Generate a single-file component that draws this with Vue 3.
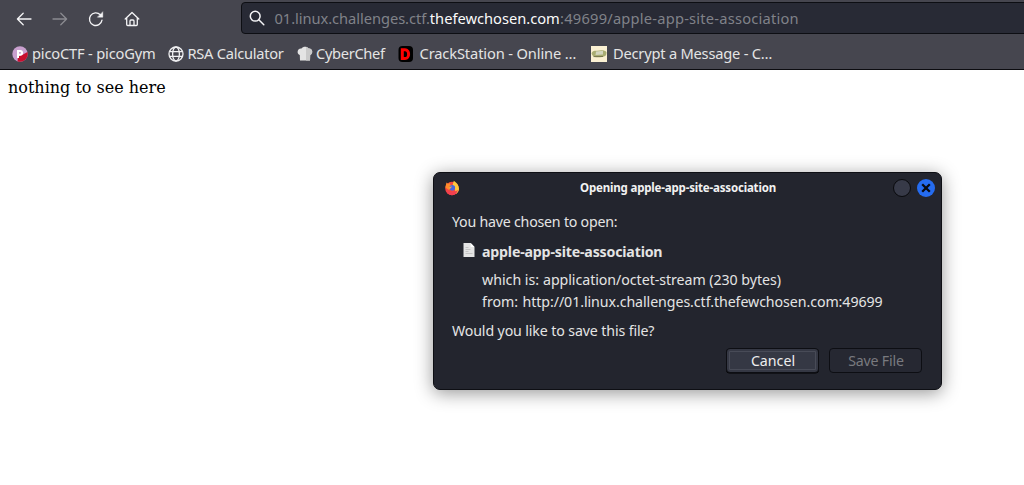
<template>
  <div class="window">
    <header class="chrome">
      <div class="toolbar">
        <nav class="nav">
          <svg viewBox="0 0 16 16"><path d="M15 8H1.500M7.200 2.200 1.400 8l5.800 5.800" /></svg>
          <svg class="off" viewBox="0 0 16 16"><path d="M1 8h13.500M8.800 2.200 14.600 8l-5.800 5.800" /></svg>
          <svg viewBox="0 0 16 16"><path d="M14 9.200A6.300 6.300 0 1 1 12.300 3.800" /><path class="fill" d="M14.800 1v5.200H9.600z" /></svg>
          <svg viewBox="0 0 16 16"><path d="M1.200 8 8 1.500 14.800 8M2.700 7v6.500c0 .7.4 1 1 1h8.600c.6 0 1-.3 1-1V7M6 14.500V10c0-.6.4-1 1-1h2c.6 0 1 .4 1 1v4.500" /></svg>
        </nav>
        <div class="url">
          <svg viewBox="0 0 16 16"><circle cx="6.200" cy="6.200" r="4.900" /><path d="m9.800 9.800 5 5" /></svg>
          <span class="address"><span class="sub">01.linux.challenges.ctf.</span><span class="host">thefewchosen.com</span><span class="path">:49699/apple-app-site-association</span></span>
        </div>
      </div>
      <nav class="bookmarks">
        <a class="bm pico">
          <svg viewBox="0 0 16 16"><circle cx="8" cy="8" r="7.700" fill="#c9a0cf" /><path d="M15.500 6A7.700 7.700 0 0 1 5.500 15.300L6 10.500l5-2z" fill="#c8102e" /><path d="M6 12V4.900h2.200a1.900 1.900 0 0 1 0 3.800H6" fill="none" stroke="#fff" stroke-width="2" /></svg>
          <span>picoCTF - picoGym</span>
        </a>
        <a class="bm rsa">
          <svg viewBox="0 0 16 16" fill="none" stroke="#f0f0f2" stroke-width="1.300"><circle cx="8" cy="8" r="7" /><ellipse cx="8" cy="8" rx="3.400" ry="7" /><path d="M1.500 5.700h13M1.500 10.300h13" /></svg>
          <span>RSA Calculator</span>
        </a>
        <a class="bm chef">
          <svg viewBox="0 0 16 16"><path d="M3 14.500 2.800 9C-.8 8 .2 2 4.500 2.500 6 .3 10.200.3 11.500 2.500c4.200-.5 5 5 1.700 6.500L13 14.500z" fill="#e4e4e4" /><path d="M9 1v13.500h4l.2-5.500C16.500 7.500 15.700 2 11.500 2.500 11 1.500 10 1 9 1z" fill="#cacaca" /></svg>
          <span>CyberChef</span>
        </a>
        <a class="bm crack">
          <svg viewBox="0 0 16 16"><rect x=".5" width="14.500" height="16" rx="4" fill="#000" /><path d="M4.300 3.800h2.700c4.800 0 4.800 8.800 0 8.800H4.300z" fill="none" stroke="#f00" stroke-width="3" /></svg>
          <span>CrackStation - Online …</span>
        </a>
        <a class="bm decrypt">
          <svg viewBox="0 0 16 16"><path fill="#fbf1d3" d="M0 0h16v16H0z" /><path d="M.5 7.500C1.500 4 4 5 6 4.700c3-.5 8-1.200 9.500 1.500.3 3-1.500 4.500-4.500 4.800-4 .5-9 1-10.500-3.500z" fill="#a9ad72" /><path d="M5 5.500 12 4.800v3.700L4.500 9z" fill="#d3d5bf" /><path d="M2.500 10.600 12 10.500" stroke="#77784e" /></svg>
          <span>Decrypt a Message - C…</span>
        </a>
      </nav>
    </header>
    <main class="page">nothing to see here</main>
    <section class="dialog">
      <div class="titlebar">
        <svg class="fox" viewBox="0 0 16 16"><circle cx="8" cy="8.500" r="6.800" fill="#f5483f" /><path d="M9.800.8C15 4 17 10 12.500 13.500 10 14 13 8 8.500 5.500z" fill="#ffc83c" /><path d="M1.300 7.500 2.500 2.600 4.300 4 5.500 2.800 6.500 5 9 6 5 10z" fill="#ff8a2a" /><circle cx="8.300" cy="7.800" r="2.800" fill="#4668df" /><path d="M4.500 7.500 8 6.300 7 8 5.500 9z" fill="#ffa436" /><path d="M2 9c2.500 3.500 7 4 12 1-1 3.500-3 5-6 5.200C4.500 15 2.500 12.500 2 9z" fill="#f23f50" /></svg>
        <h1>Opening apple-app-site-association</h1>
        <i class="round"></i>
        <i class="round close"><svg viewBox="0 0 18 18"><path d="m5.200 5.200 7.600 7.600m0-7.600-7.600 7.600" /></svg></i>
      </div>
      <div class="body">
        <p class="lead">You have chosen to open:</p>
        <div class="file">
          <svg viewBox="0 0 12 14"><path d="M.5 0h7.200L11.500 4v10H.5z" fill="#e4e4e4" /><path d="M7.700 0v4h3.800z" fill="#fff" /><path d="M2.500 4.500h3M2.500 6.500h5M2.500 8.500h3M2.500 10.500h7" stroke="#c4c4c4" /></svg>
          <strong>apple-app-site-association</strong>
        </div>
        <p class="row"><span class="key">which is:</span><span class="kind">application/octet-stream (230 bytes)</span></p>
        <p class="row"><span class="key from">from:</span><span class="source">http://01.linux.challenges.ctf.thefewchosen.com:49699</span></p>
        <p class="ask">Would you like to save this file?</p>
        <div class="buttons">
          <button class="cancel">Cancel</button>
          <button class="save" disabled>Save File</button>
        </div>
      </div>
    </section>
  </div>
</template>

<script setup>
</script>

<style>
body { margin: 0; background: #fff; overflow: hidden; }
</style>

<style scoped>
* { box-sizing: border-box; }
.window { position: relative; height: 485px; overflow: hidden; font: 14.667px/20px "Noto Sans", sans-serif; }
svg { display: block; flex: none; width: 16px; height: 16px; }
p, h1 { margin: 0; }
.chrome { height: 70px; background: #46464f; border-bottom: 1px solid #0c0c10; color: #e4e4e4; white-space: nowrap; }
.toolbar { display: flex; height: 38px; }
.nav { flex: none; display: flex; gap: 20px; width: 241px; padding: 11px 0 0 16px; }
.nav svg, .url svg { fill: none; stroke: #f4f4f6; stroke-width: 1.3; stroke-linecap: round; stroke-linejoin: round; }
.nav .off { stroke: #8b8b91; }
.nav .fill { fill: #f4f4f6; stroke-width: .4; }
.url { flex: none; display: flex; width: 800px; height: 32px; margin-top: 2px; padding: 6px 0 0 7px; background: #282a35; border: 1px solid #0d0e13; border-radius: 4px; }
.url svg { margin-top: 1px; stroke-width: 1.5; }
.address { display: flex; margin: -1px 0 0 9.500px; color: #808289; }
.sub { letter-spacing: -.05px; }
.host { color: #fbfbfb; width: 130.300px; }
.path { letter-spacing: .22px; }
.bookmarks { display: flex; height: 31px; padding: 5px 0 0 12px; }
.bm { display: flex; }
.bm svg { margin-top: 3px; }
.pico { width: 155.500px; gap: 4px; letter-spacing: -.18px; }
.rsa { width: 129px; gap: 4px; letter-spacing: -.27px; }
.chef { width: 101px; gap: 3.500px; letter-spacing: -.33px; }
.crack { width: 193.500px; gap: 6px; letter-spacing: -.13px; }
.decrypt { gap: 6px; letter-spacing: -.22px; }
.page { padding: 8px; font: 16px/19px "DejaVu Serif", serif; color: #000; }
.dialog { position: absolute; left: 433px; top: 172px; width: 509px; height: 218px; background: #23252e; border: 1px solid #0e0f14; border-radius: 7px; box-shadow: 0 3px 18px rgba(0, 0, 0, .42); color: #e4e4e4; font-size: 14.2px; }
.titlebar { display: flex; height: 30px; padding: 6px 6px 0 10px; }
.fox { margin-top: 1px; }
h1 { flex: 1; padding-left: 9px; text-align: center; font-size: 11.500px; line-height: 18px; letter-spacing: -.18px; color: #f2f2f2; }
.round { width: 18px; height: 18px; margin-left: 6px; border: 1.500px solid #090a0d; border-radius: 50%; background: #373a48; }
.round.close { border: 0; background: #256cf0; }
.close svg { width: 18px; height: 18px; fill: none; stroke: #080a10; stroke-width: 2.300; }
.body { padding: 9px 19px 0 18px; white-space: nowrap; }
.lead { letter-spacing: -.22px; }
.file { display: flex; margin: 10px 0 8px 11px; gap: 7px; letter-spacing: -.19px; }
.file svg { width: 12px; height: 14px; margin-top: 1px; }
.row { display: flex; height: 22px; padding-left: 30px; }
.key { width: 61px; }
.key.from { width: 40.500px; }
.kind { letter-spacing: -.05px; }
.source { letter-spacing: -.07px; }
.ask { margin-top: 7px; letter-spacing: -.13px; }
.buttons { display: flex; justify-content: flex-end; gap: 10px; margin-top: 7px; }
button { width: 93px; height: 25px; padding: 0 0 0 1px; font: inherit; line-height: 22px; border: 1px solid #0d0e13; border-radius: 4px; background: #353844; color: #eee; }
.cancel { box-shadow: inset 0 0 0 2px #353844, inset 0 0 0 3px #484b57, 0 .5px 0 #000; }
.save { background: #262832; color: #797a7f; letter-spacing: -.2px; }
</style>
